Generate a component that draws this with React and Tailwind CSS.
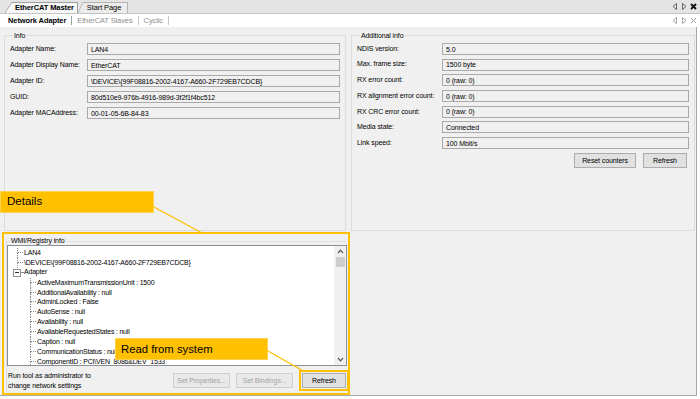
import React from 'react'

const info = [
    ['Adapter Name:', 'LAN4'],
    ['Adapter Display Name:', 'EtherCAT'],
    ['Adapter ID:', '\\DEVICE\\{99F08816-2002-4167-A660-2F729EB7CDCB}'],
    ['GUID:', '80d510e9-976b-4916-989d-3f2f1f4bc512'],
    ['Adapter MACAddress:', '00-01-05-6B-84-83'],
]

const extra = [
    ['NDIS version:', '5.0'],
    ['Max. frame size:', '1500 byte'],
    ['RX error count:', '0 (raw: 0)'],
    ['RX alignment error count:', '0 (raw: 0)'],
    ['RX CRC error count:', '0 (raw: 0)'],
    ['Media state:', 'Connected'],
    ['Link speed:', '100 Mbit/s'],
]

const adapterProps = [
    'ActiveMaximumTransmissionUnit : 1500',
    'AdditionalAvailability : null',
    'AdminLocked : False',
    'AutoSense : null',
    'Availability : null',
    'AvailableRequestedStates : null',
    'Caption : null',
    'CommunicationStatus : null',
    'ComponentID : PCI\\VEN_8086&DEV_1533',
]

const PaneIcons = ({ dim }) => (
    <div className="flex items-center gap-[3px] pr-[3px]">
        <svg width="6" height="7" viewBox="0 0 6 7">
            <path d="M4.5 0.5 L1 3.5 L4.5 6.5 Z" fill="none" stroke={dim ? '#9a9a9a' : '#555'} strokeWidth="0.9" />
        </svg>
        <svg width="6" height="7" viewBox="0 0 6 7">
            <path d="M1.5 0.5 L5 3.5 L1.5 6.5 Z" fill="none" stroke={dim ? '#9a9a9a' : '#555'} strokeWidth="0.9" />
        </svg>
        <svg width="7" height="7" viewBox="0 0 7 7">
            <path d="M1 1 L6 6 M6 1 L1 6" stroke={dim ? '#9a9a9a' : '#111'} strokeWidth={dim ? 1 : 1.8} />
        </svg>
    </div>
)

const Field = ({ label, value, labelW }) => (
    <div className="flex items-center h-[12px]">
        <span className={`${labelW} shrink-0 whitespace-nowrap`}>{label}</span>
        <div className="flex-1 h-full border border-[#a9a9a9] bg-[#f0f0f0] flex items-center px-[3px] leading-none">
            {value}
        </div>
    </div>
)

const Button = ({ children, w, disabled }) => (
    <button
        className={`${w} h-[15px] text-[7px] leading-none border ${
            disabled ? 'border-[#cfcfcf] bg-[#e9e9e9] text-[#a3a3a3]' : 'border-[#adadad] bg-[#e1e1e1] text-black'
        }`}
    >
        {children}
    </button>
)

const TreeLeaf = ({ text }) => (
    <div className="flex h-[9.9px] pl-[22px]">
        <div className="w-[6px] h-full flex flex-col">
            <div className="h-1/2 border-l border-b border-dotted border-[#8a8a8a]" />
            <div className="h-1/2 border-l border-dotted border-[#8a8a8a]" />
        </div>
        <span className="pl-[1px] leading-[9.9px] whitespace-nowrap">{text}</span>
    </div>
)

export default function App() {
    return (
        <div className="w-[700px] h-[399px] overflow-hidden relative bg-white text-[7px] tracking-[-0.1px] text-black font-['Liberation_Sans',Arial,sans-serif]">
            {/* document tabs */}
            <div className="h-[14px] bg-[#e4e4e4] border-b border-[#c4c4c4] flex items-end justify-between">
                <div className="flex items-end pl-[5px] h-full">
                    <div className="flex items-end h-[11px]">
                        <svg width="7" height="11" viewBox="0 0 7 11">
                            <path d="M0 11 L7 0 L7 11 Z" fill="#f7f7f7" />
                            <path d="M0 11 L7 0" stroke="#9f9f9f" strokeWidth="0.8" />
                        </svg>
                        <div className="h-full bg-[#f7f7f7] border-t border-r border-[#9f9f9f] px-[3px] flex items-center font-bold text-[7.5px]">
                            EtherCAT Master
                        </div>
                    </div>
                    <div className="flex items-end h-[11px]">
                        <svg width="5" height="11" viewBox="0 0 5 11">
                            <path d="M0 11 L5 0 L5 11 Z" fill="#ececec" />
                            <path d="M0 11 L5 0" stroke="#b4b4b4" strokeWidth="0.8" />
                        </svg>
                        <div className="h-full bg-[#ececec] border-t border-r border-[#b4b4b4] pl-[4px] pr-[6px] flex items-center text-[7.5px]">
                            Start Page
                        </div>
                    </div>
                </div>
                <div className="h-full flex items-center">
                    <PaneIcons />
                </div>
            </div>

            {/* sub tabs */}
            <div className="h-[13px] bg-white flex items-center justify-between text-[7.5px]">
                <div className="flex items-center pl-[8px] gap-[5px]">
                    <span className="font-bold">Network Adapter</span>
                    <span className="w-px h-[9px] bg-[#a0a0a0]" />
                    <span className="text-[#8f8f8f]">EtherCAT Slaves</span>
                    <span className="w-px h-[9px] bg-[#c8c8c8]" />
                    <span className="text-[#8f8f8f]">Cyclic</span>
                    <span className="w-px h-[9px] bg-[#c8c8c8]" />
                </div>
                <PaneIcons dim />
            </div>

            {/* content */}
            <div className="w-[697px] h-[369px] bg-[#f0f0f0] border-r border-b border-[#a8a8a8] pt-[4px] pl-[4px] flex flex-col">
                <div className="flex gap-[5px] h-[200px]">
                    <fieldset className="w-[342px] h-full border border-[#dcdcdc] px-[5px]">
                        <legend className="ml-[3px] px-[1px] leading-[9px]">Info</legend>
                        <div className="flex flex-col gap-[4px] pt-[3px]">
                            {info.map(([l, v]) => (
                                <Field key={l} label={l} value={v} labelW="w-[77px]" />
                            ))}
                        </div>
                    </fieldset>
                    <fieldset className="w-[344px] h-full border border-[#dcdcdc] pl-[5px] pr-[5px]">
                        <legend className="ml-[3px] px-[1px] leading-[9px]">Additional info</legend>
                        <div className="flex flex-col gap-[3.7px] pt-[3px]">
                            {extra.map(([l, v]) => (
                                <Field key={l} label={l} value={v} labelW="w-[85px]" />
                            ))}
                        </div>
                        <div className="flex justify-end gap-[7px] mt-[4px] pr-[2px]">
                            <Button w="w-[62px]">Reset counters</Button>
                            <Button w="w-[44px]">Refresh</Button>
                        </div>
                    </fieldset>
                </div>

                {/* WMI / registry */}
                <div className="w-[348px] h-[163px] ml-[-2px] mt-[1px] border-2 border-[#ffc000] pl-[2px] pr-[1px] pt-[3px] flex flex-col">
                    <fieldset className="flex-1 border-t border-l border-[#e0e0e0] flex flex-col">
                        <legend className="ml-[3px] px-[1px] leading-[8px]">WMI/Registry info</legend>
                        <div className="w-[340px] h-[121px] border border-[#8b9097] bg-white flex">
                            <div className="flex-1 pt-[2px] overflow-hidden tracking-[-0.2px]">
                                <div className="flex h-[9.9px] pl-[9px]">
                                    <div className="w-[6px] h-full flex flex-col">
                                        <div className="h-1/2 border-l border-b border-dotted border-[#8a8a8a]" />
                                        <div className="h-1/2 border-l border-dotted border-[#8a8a8a]" />
                                    </div>
                                    <span className="pl-[1px] leading-[9.9px]">LAN4</span>
                                </div>
                                <div className="flex h-[9.9px] pl-[9px]">
                                    <div className="w-[6px] h-full flex flex-col">
                                        <div className="h-1/2 border-l border-b border-dotted border-[#8a8a8a]" />
                                        <div className="h-1/2 border-l border-dotted border-[#8a8a8a]" />
                                    </div>
                                    <span className="pl-[1px] leading-[9.9px]">\DEVICE\{'{'}99F08816-2002-4167-A660-2F729EB7CDCB{'}'}</span>
                                </div>
                                <div className="flex items-center h-[9.9px] pl-[5px]">
                                    <div className="w-[8px] h-[8px] border border-[#919191] bg-white flex items-center justify-center">
                                        <div className="w-[4px] h-px bg-[#333]" />
                                    </div>
                                    <div className="w-[2px] border-t border-dotted border-[#8a8a8a]" />
                                    <span className="pl-[1px]">Adapter</span>
                                </div>
                                {adapterProps.map((p) => (
                                    <TreeLeaf key={p} text={p} />
                                ))}
                            </div>
                            <div className="w-[12px] h-full bg-[#f0f0f0] flex flex-col items-center justify-between py-[3px]">
                                <div className="flex flex-col items-center gap-[3px]">
                                    <svg width="7" height="5" viewBox="0 0 7 5">
                                        <path d="M1 4 L3.5 1.2 L6 4" fill="none" stroke="#555" strokeWidth="1.2" />
                                    </svg>
                                    <div className="w-[9px] h-[10px] bg-[#cdcdcd]" />
                                </div>
                                <svg width="7" height="5" viewBox="0 0 7 5">
                                    <path d="M1 1 L3.5 3.8 L6 1" fill="none" stroke="#555" strokeWidth="1.2" />
                                </svg>
                            </div>
                        </div>
                        <div className="flex items-center mt-[3px] pr-[1px]">
                            <div className="flex-1 leading-[10px] pl-[1px] pt-[2px]">
                                Run tool as administrator to
                                <br />
                                change network settings
                            </div>
                            <div className="flex items-center gap-[6px]">
                                <Button w="w-[57px]" disabled>Set Properties...</Button>
                                <Button w="w-[57px]" disabled>Set Bindings...</Button>
                                <div className="border-2 border-[#ffc000] p-[1px] mr-[-3px]">
                                    <Button w="w-[44px]">Refresh</Button>
                                </div>
                            </div>
                        </div>
                    </fieldset>
                </div>
            </div>

            {/* callouts */}
            <div className="absolute left-0 top-[191px] w-[154px] h-[22px] bg-[#ffc000] border border-[#ffd24d] flex items-center pl-[6px] text-[11.5px] tracking-normal text-black">
                Details
            </div>
            <div className="absolute left-[115px] top-[338px] w-[153px] h-[22px] bg-[#ffc000] border border-[#ffd24d] flex items-center pl-[5px] text-[11.3px] tracking-normal text-black">
                Read from system
            </div>
            <svg className="absolute inset-0 pointer-events-none" width="700" height="399">
                <line x1="154" y1="207" x2="202" y2="233" stroke="#ffc000" strokeWidth="1.3" />
                <line x1="268" y1="351" x2="305" y2="372" stroke="#ffc000" strokeWidth="1.3" />
            </svg>
        </div>
    )
}
